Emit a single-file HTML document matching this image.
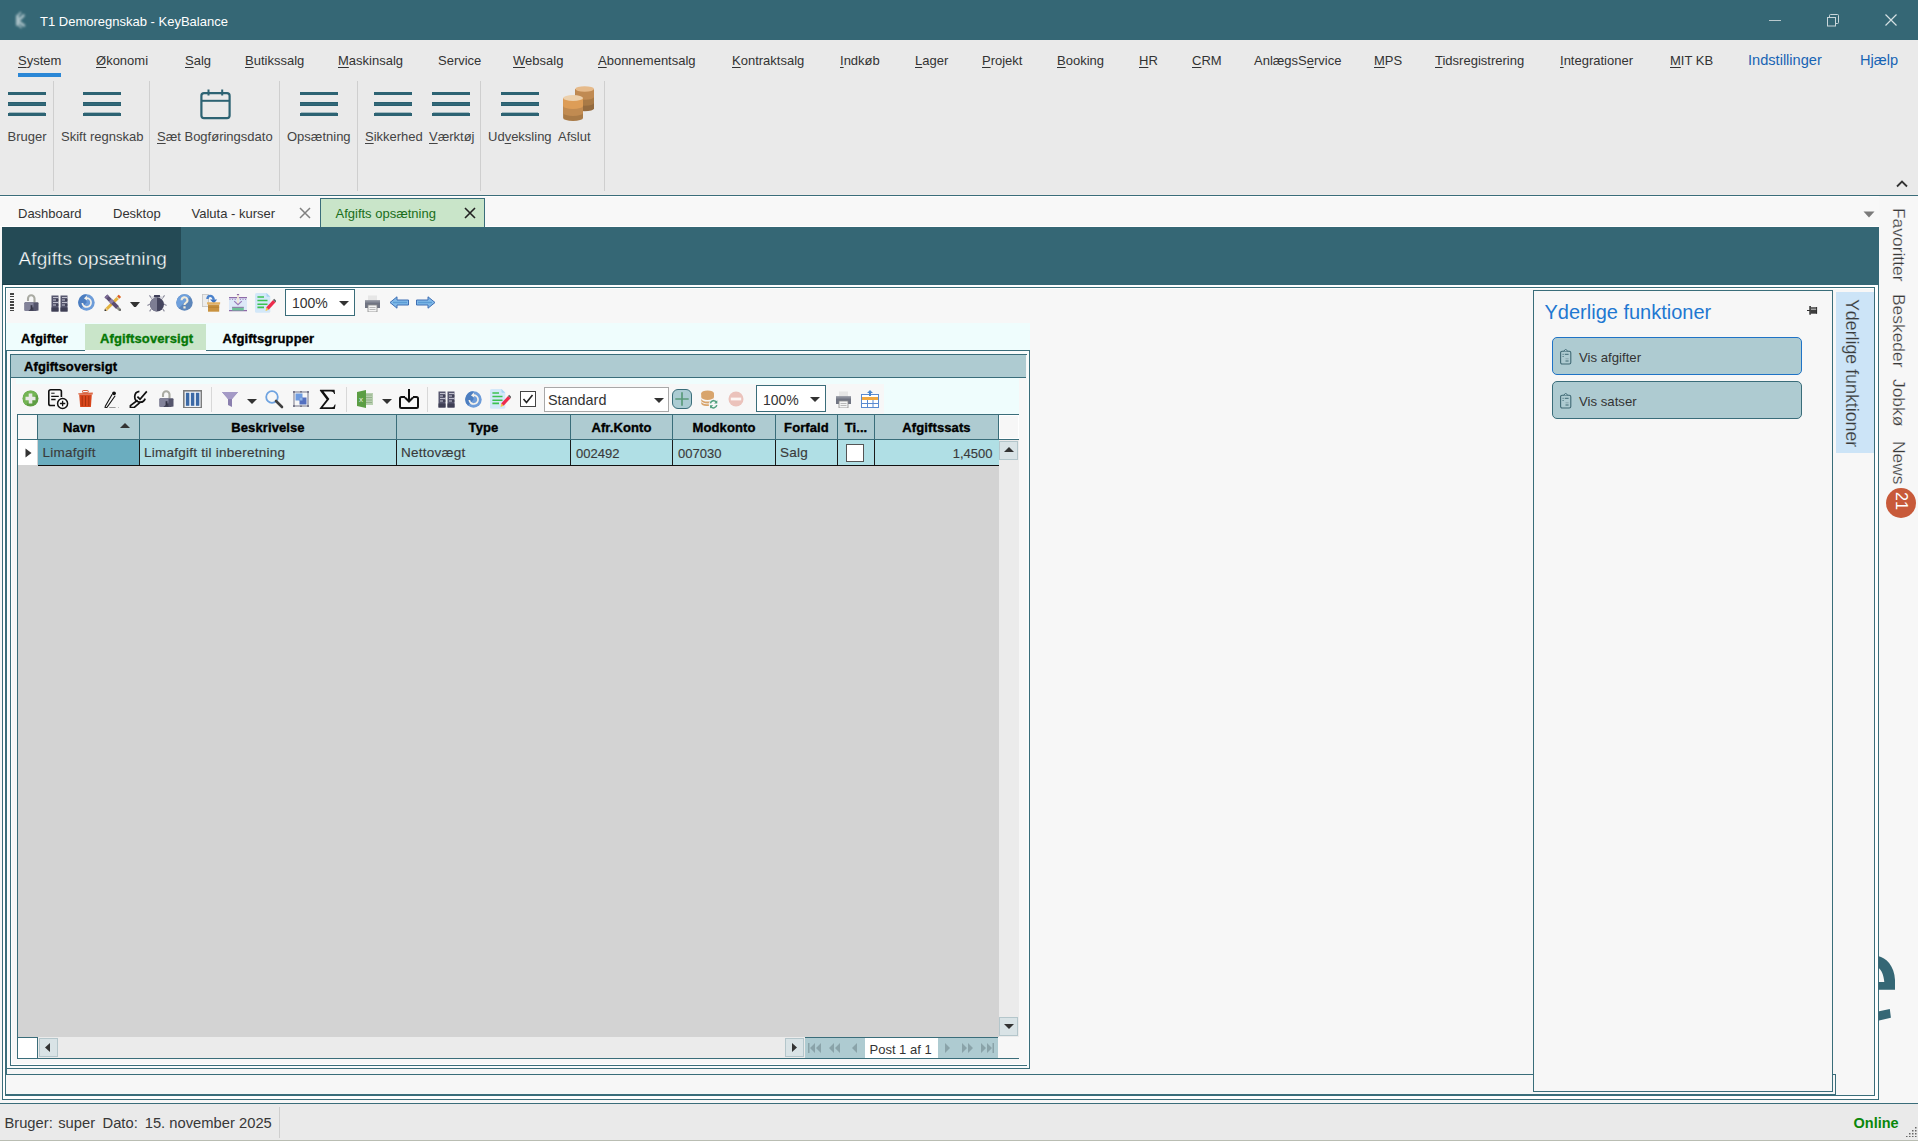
<!DOCTYPE html><html><head><meta charset="utf-8"><style>
html,body{margin:0;padding:0;}
body{width:1918px;height:1141px;position:relative;overflow:hidden;background:#f7f7f7;font-family:"Liberation Sans",sans-serif;}
div{position:absolute;box-sizing:border-box;}
.t{white-space:nowrap;}
u{text-decoration:underline;text-underline-offset:2px;text-decoration-thickness:1px;}
</style></head><body>
<div style="left:0px;top:0px;width:1918px;height:40px;background:#356775"></div>
<svg style="position:absolute;left:8px;top:8px" width="24" height="26" viewBox="0 0 24 26"><defs><filter id="kb" x="-50%" y="-50%" width="200%" height="200%"><feGaussianBlur stdDeviation="0.9"/></filter></defs><g filter="url(#kb)" stroke="#a9c0c6" stroke-linecap="round" fill="none"><path d="M9.5 8V16.5" stroke-width="3"/><path d="M15.5 7.5L10 13L16 17.5" stroke-width="2.6"/><path d="M10.5 7L12.5 4.5" stroke-width="1.6"/><path d="M11 17.5L13 19.5" stroke-width="1.6"/></g></svg>
<div class="t" style="left:40px;top:15.00px;font-size:13px;line-height:13px;font-weight:400;color:#ffffff;">T1 Demoregnskab - KeyBalance</div>
<div style="left:1769px;top:20px;width:12px;height:1px;background:#b9c9cd"></div>
<svg style="position:absolute;left:1826px;top:14px" width="13" height="13" viewBox="0 0 13 13"><rect x="1.5" y="3.5" width="8" height="8.5" fill="none" stroke="#c9d6da" stroke-width="1"/><path d="M3.5 3.5V1.5Q3.5 0.5 4.5 0.5H11.5Q12.5 0.5 12.5 1.5V8.5Q12.5 9.5 11.5 9.5H9.5" fill="none" stroke="#c9d6da" stroke-width="1"/></svg>
<svg style="position:absolute;left:1885px;top:14px" width="12" height="12" viewBox="0 0 12 12"><path d="M0.5 0.5L11.5 11.5M11.5 0.5L0.5 11.5" stroke="#d5e0e3" stroke-width="1.2"/></svg>
<div style="left:0px;top:40px;width:1918px;height:154px;background:#eaeaea"></div>
<div class="t" style="left:18px;top:54.00px;font-size:13px;line-height:13px;font-weight:400;color:#333;"><u>S</u>ystem</div>
<div class="t" style="left:96px;top:54.00px;font-size:13px;line-height:13px;font-weight:400;color:#333;"><u>Ø</u>konomi</div>
<div class="t" style="left:185px;top:54.00px;font-size:13px;line-height:13px;font-weight:400;color:#333;"><u>S</u>alg</div>
<div class="t" style="left:245px;top:54.00px;font-size:13px;line-height:13px;font-weight:400;color:#333;"><u>B</u>utikssalg</div>
<div class="t" style="left:338px;top:54.00px;font-size:13px;line-height:13px;font-weight:400;color:#333;"><u>M</u>askinsalg</div>
<div class="t" style="left:438px;top:54.00px;font-size:13px;line-height:13px;font-weight:400;color:#333;">Service</div>
<div class="t" style="left:513px;top:54.00px;font-size:13px;line-height:13px;font-weight:400;color:#333;"><u>W</u>ebsalg</div>
<div class="t" style="left:598px;top:54.00px;font-size:13px;line-height:13px;font-weight:400;color:#333;"><u>A</u>bonnementsalg</div>
<div class="t" style="left:732px;top:54.00px;font-size:13px;line-height:13px;font-weight:400;color:#333;"><u>K</u>ontraktsalg</div>
<div class="t" style="left:840px;top:54.00px;font-size:13px;line-height:13px;font-weight:400;color:#333;"><u>I</u>ndkøb</div>
<div class="t" style="left:915px;top:54.00px;font-size:13px;line-height:13px;font-weight:400;color:#333;"><u>L</u>ager</div>
<div class="t" style="left:982px;top:54.00px;font-size:13px;line-height:13px;font-weight:400;color:#333;"><u>P</u>rojekt</div>
<div class="t" style="left:1057px;top:54.00px;font-size:13px;line-height:13px;font-weight:400;color:#333;"><u>B</u>ooking</div>
<div class="t" style="left:1139px;top:54.00px;font-size:13px;line-height:13px;font-weight:400;color:#333;"><u>H</u>R</div>
<div class="t" style="left:1192px;top:54.00px;font-size:13px;line-height:13px;font-weight:400;color:#333;"><u>C</u>RM</div>
<div class="t" style="left:1254px;top:54.00px;font-size:13px;line-height:13px;font-weight:400;color:#333;">AnlægsS<u>e</u>rvice</div>
<div class="t" style="left:1374px;top:54.00px;font-size:13px;line-height:13px;font-weight:400;color:#333;"><u>M</u>PS</div>
<div class="t" style="left:1435px;top:54.00px;font-size:13px;line-height:13px;font-weight:400;color:#333;"><u>T</u>idsregistrering</div>
<div class="t" style="left:1560px;top:54.00px;font-size:13px;line-height:13px;font-weight:400;color:#333;"><u>I</u>ntegrationer</div>
<div class="t" style="left:1670px;top:54.00px;font-size:13px;line-height:13px;font-weight:400;color:#333;"><u>M</u>IT KB</div>
<div class="t" style="left:1748px;top:53.14px;font-size:14.6px;line-height:14.6px;font-weight:400;color:#1864b4;">Indstillinger</div>
<div class="t" style="left:1860px;top:53.14px;font-size:14.6px;line-height:14.6px;font-weight:400;color:#1864b4;">Hjælp</div>
<div style="left:18px;top:73px;width:43px;height:4px;background:#2b87d6"></div>
<div style="left:53px;top:81px;width:1px;height:110px;background:#cfcfcf"></div>
<div style="left:149px;top:81px;width:1px;height:110px;background:#cfcfcf"></div>
<div style="left:279px;top:81px;width:1px;height:110px;background:#cfcfcf"></div>
<div style="left:357px;top:81px;width:1px;height:110px;background:#cfcfcf"></div>
<div style="left:480px;top:81px;width:1px;height:110px;background:#cfcfcf"></div>
<div style="left:604px;top:81px;width:1px;height:110px;background:#cfcfcf"></div>
<div style="left:8px;top:92px;width:38px;height:3px;background:#2d6373"></div>
<div style="left:8px;top:102px;width:38px;height:4px;background:#326878;box-shadow:inset 0 1px 0 #2a5f6f, inset 0 -1px 0 #2a5f6f"></div>
<div style="left:9px;top:112px;width:36px;height:1px;background:#a6bcc2"></div>
<div style="left:8px;top:113px;width:38px;height:3px;background:#2d6373"></div>
<div style="left:83px;top:92px;width:38px;height:3px;background:#2d6373"></div>
<div style="left:83px;top:102px;width:38px;height:4px;background:#326878;box-shadow:inset 0 1px 0 #2a5f6f, inset 0 -1px 0 #2a5f6f"></div>
<div style="left:84px;top:112px;width:36px;height:1px;background:#a6bcc2"></div>
<div style="left:83px;top:113px;width:38px;height:3px;background:#2d6373"></div>
<div style="left:300px;top:92px;width:38px;height:3px;background:#2d6373"></div>
<div style="left:300px;top:102px;width:38px;height:4px;background:#326878;box-shadow:inset 0 1px 0 #2a5f6f, inset 0 -1px 0 #2a5f6f"></div>
<div style="left:301px;top:112px;width:36px;height:1px;background:#a6bcc2"></div>
<div style="left:300px;top:113px;width:38px;height:3px;background:#2d6373"></div>
<div style="left:374px;top:92px;width:38px;height:3px;background:#2d6373"></div>
<div style="left:374px;top:102px;width:38px;height:4px;background:#326878;box-shadow:inset 0 1px 0 #2a5f6f, inset 0 -1px 0 #2a5f6f"></div>
<div style="left:375px;top:112px;width:36px;height:1px;background:#a6bcc2"></div>
<div style="left:374px;top:113px;width:38px;height:3px;background:#2d6373"></div>
<div style="left:432px;top:92px;width:38px;height:3px;background:#2d6373"></div>
<div style="left:432px;top:102px;width:38px;height:4px;background:#326878;box-shadow:inset 0 1px 0 #2a5f6f, inset 0 -1px 0 #2a5f6f"></div>
<div style="left:433px;top:112px;width:36px;height:1px;background:#a6bcc2"></div>
<div style="left:432px;top:113px;width:38px;height:3px;background:#2d6373"></div>
<div style="left:501px;top:92px;width:38px;height:3px;background:#2d6373"></div>
<div style="left:501px;top:102px;width:38px;height:4px;background:#326878;box-shadow:inset 0 1px 0 #2a5f6f, inset 0 -1px 0 #2a5f6f"></div>
<div style="left:502px;top:112px;width:36px;height:1px;background:#a6bcc2"></div>
<div style="left:501px;top:113px;width:38px;height:3px;background:#2d6373"></div>
<svg style="position:absolute;left:200px;top:88px" width="32" height="32" viewBox="0 0 32 32"><rect x="1.4" y="5.2" width="28.2" height="25" rx="2.6" fill="none" stroke="#2d6373" stroke-width="2.2"/><path d="M1.4 12.8H29.6" stroke="#2d6373" stroke-width="2"/><path d="M8.5 1.6V7.6M22.2 1.6V7.6" stroke="#2d6373" stroke-width="2"/></svg>
<svg style="position:absolute;left:562px;top:85px" width="34" height="38" viewBox="0 0 34 38">
<path d="M13.3 4V23.5A9.35 2.7 0 0 0 32 23.5V4Z" fill="#946b3f"/>
<path d="M13.3 4V18A9.35 2.7 0 0 0 32 18V4Z" fill="#a97a46"/>
<path d="M13.3 4V12A9.35 2.7 0 0 0 32 12V4Z" fill="#c08a52"/>
<ellipse cx="22.65" cy="4" rx="9.35" ry="2.7" fill="#e6ba8a"/>
<path d="M1.1 13V33A9.95 3 0 0 0 21 33V13Z" fill="#a97a46"/>
<path d="M1.1 13V28A9.95 3 0 0 0 21 28V13Z" fill="#c18b51"/>
<path d="M1.1 13V21A9.95 3 0 0 0 21 21V13Z" fill="#dd9d57"/>
<ellipse cx="11.05" cy="13" rx="9.95" ry="3" fill="#ecd0ac"/>
</svg>
<div class="t" style="left:7.5px;top:130.00px;font-size:13px;line-height:13px;font-weight:400;color:#444;">Bruger</div>
<div class="t" style="left:61px;top:130.00px;font-size:13px;line-height:13px;font-weight:400;color:#444;">Skift regnskab</div>
<div class="t" style="left:157px;top:130.00px;font-size:13px;line-height:13px;font-weight:400;color:#444;"><u>S</u>æt Bogføringsdato</div>
<div class="t" style="left:287px;top:130.00px;font-size:13px;line-height:13px;font-weight:400;color:#444;">Opsætning</div>
<div class="t" style="left:365px;top:130.00px;font-size:13px;line-height:13px;font-weight:400;color:#444;"><u>S</u>ikkerhed</div>
<div class="t" style="left:429px;top:130.00px;font-size:13px;line-height:13px;font-weight:400;color:#444;"><u>V</u>ærktøj</div>
<div class="t" style="left:488px;top:130.00px;font-size:13px;line-height:13px;font-weight:400;color:#444;">Ud<u>v</u>eksling</div>
<div class="t" style="left:558px;top:130.00px;font-size:13px;line-height:13px;font-weight:400;color:#444;">Afslut</div>
<svg style="position:absolute;left:1896px;top:179px" width="12" height="9" viewBox="0 0 12 9"><path d="M1 7.5L6 2.5L11 7.5" fill="none" stroke="#333" stroke-width="1.8"/></svg>
<div style="left:0px;top:194px;width:1918px;height:1px;background:#eeebea"></div>
<div style="left:0px;top:196px;width:1918px;height:1px;background:#ffffff"></div>
<div style="left:0px;top:195px;width:1918px;height:1px;background:#3a6d7a"></div>
<div style="left:0px;top:196px;width:1918px;height:31px;background:#f8f8f8;border-top:1px solid #fff;border-bottom:1px solid #fff"></div>
<div class="t" style="left:18px;top:207.00px;font-size:13px;line-height:13px;font-weight:400;color:#333;">Dashboard</div>
<div class="t" style="left:113px;top:207.00px;font-size:13px;line-height:13px;font-weight:400;color:#333;">Desktop</div>
<div class="t" style="left:191.5px;top:207.00px;font-size:13px;line-height:13px;font-weight:400;color:#333;">Valuta - kurser</div>
<svg style="position:absolute;left:299px;top:207px" width="12" height="12" viewBox="0 0 12 12"><path d="M1 1L11 11M11 1L1 11" stroke="#808080" stroke-width="1.5"/></svg>
<div style="left:320px;top:198px;width:165px;height:30px;background:#c9e5c9;border:1px solid #3a6d7a;border-bottom:none"></div>
<div class="t" style="left:335.5px;top:207.00px;font-size:13px;line-height:13px;font-weight:400;color:#1a6e1a;">Afgifts opsætning</div>
<svg style="position:absolute;left:464px;top:207px" width="12" height="12" viewBox="0 0 12 12"><path d="M1 1L11 11M11 1L1 11" stroke="#222" stroke-width="1.6"/></svg>
<svg style="position:absolute;left:1863px;top:210.5px" width="12" height="7" viewBox="0 0 12 7"><path d="M0.5 0.5H11.5L6 6.5Z" fill="#7a7a7a"/></svg>
<div style="left:1879px;top:196px;width:39px;height:907px;background:#f7f7f7"></div>
<div style="left:2px;top:227px;width:1877px;height:58px;background:#356775"></div>
<div style="left:2px;top:227px;width:179px;height:58px;background:#244a55"></div>
<div style="left:2px;top:284px;width:179px;height:1px;background:#1d3f49"></div>
<div class="t" style="left:18.5px;top:248.92px;font-size:19px;line-height:19px;font-weight:400;color:#ffffff;-webkit-text-stroke:0.35px #244a55;letter-spacing:0.1px">Afgifts opsætning</div>
<div style="left:2px;top:285px;width:1877px;height:815px;border-left:1px solid #3a6d7a;border-right:1px solid #3a6d7a;border-bottom:1px solid #3a6d7a;background:#ffffff"></div>
<div style="left:5px;top:287px;width:1870px;height:809px;border:1px solid #3a6d7a;background:#f7f7f7"></div>
<div style="left:6px;top:288px;width:1868px;height:1px;background:#ffffff"></div>
<div style="left:6px;top:288px;width:1px;height:806px;background:#ffffff"></div>
<div style="left:10px;top:293.0px;width:4px;height:1.5px;background:#444"></div>
<div style="left:10px;top:295.8px;width:4px;height:1.5px;background:#444"></div>
<div style="left:10px;top:298.6px;width:4px;height:1.5px;background:#444"></div>
<div style="left:10px;top:301.4px;width:4px;height:1.5px;background:#444"></div>
<div style="left:10px;top:304.2px;width:4px;height:1.5px;background:#444"></div>
<div style="left:10px;top:307.0px;width:4px;height:1.5px;background:#444"></div>
<div style="left:10px;top:309.8px;width:4px;height:1.5px;background:#444"></div>
<svg style="position:absolute;left:24px;top:294px" width="15" height="17" viewBox="0 0 15 17"><path d="M4 7V4.5A3.2 3.2 0 0 1 10.5 4.5V8.5" fill="none" stroke="#a9aaa2" stroke-width="2.1"/><path d="M0.5 9.2Q0.5 8.2 1.5 8.2H13.5Q14.5 8.2 14.5 9.2V16.5Q7.5 18 0.5 16.5Z" fill="#55556c"/><path d="M0.5 9.2Q0.5 8.2 1.5 8.2H9.5V14L4 17.3L0.5 16.5Z" fill="#828299"/><path d="M4 17.3L9.5 12.5V17.4Q6.5 17.6 4 17.3Z" fill="#444458"/><path d="M6.6 11.2H8.4V15.5H6.6Z" fill="#333344"/></svg>
<svg style="position:absolute;left:51px;top:295px" width="17" height="17" viewBox="0 0 17 17"><rect x="0.5" y="0.5" width="7" height="16" fill="#56566e"/><rect x="9.5" y="0.5" width="7" height="16" fill="#56566e"/><path d="M2 2.5H7.5M2 5H5M2 7.5H7.5M2 10H5M11 2.5H16.5M11 5H14M11 7.5H16.5M11 10H14" stroke="#c0c0cc" stroke-width="1.1"/><path d="M5 5H7.5M5 10H7.5M14 5H16.5M14 10H16.5" stroke="#2e2e40" stroke-width="1.1"/><rect x="0.5" y="12.5" width="7" height="4" fill="#3e3e54"/><rect x="9.5" y="12.5" width="7" height="4" fill="#3e3e54"/></svg>
<svg style="position:absolute;left:78px;top:294px" width="17" height="17" viewBox="0 0 17 17"><circle cx="8.5" cy="8.5" r="8.2" fill="#6d9cd9"/><path d="M8.5 0.3A8.2 8.2 0 0 0 3 14.6L8.5 8.5Z" fill="#4d7ec0"/><path d="M8.2 4.2A4.4 4.4 0 1 1 4.3 9" fill="none" stroke="#f4f1ea" stroke-width="1.7"/><path d="M8.8 1.6L6 4.5L9.2 6.6Z" fill="#f4f1ea"/></svg>
<svg style="position:absolute;left:104px;top:294px" width="17" height="17" viewBox="0 0 17 17"><path d="M15.8 1.9L1.4 16.3" stroke="#e5b43e" stroke-width="3"/><path d="M15.8 1.9L14.4 3.3" stroke="#e0582e" stroke-width="3.2"/><path d="M14.1 3.6L13.5 4.2" stroke="#d6dcdc" stroke-width="3"/><path d="M3 14.7L1.2 16.5" stroke="#e8c890" stroke-width="2.4"/><path d="M1.9 15.8L0.8 16.9" stroke="#333" stroke-width="1.6"/><path d="M1.9 1.9L13.6 13.6" stroke="#5b4d72" stroke-width="4"/><path d="M6.2 6.2L8.6 8.6" stroke="#8d7da6" stroke-width="4"/><path d="M1.9 1.9L3.5 3.5" stroke="#7c6c96" stroke-width="4"/><path d="M13.4 13.4L16.2 16.2" stroke="#8c8c86" stroke-width="2.8"/><path d="M15.6 15.6L16.6 16.6" stroke="#444" stroke-width="1.4"/></svg>
<svg style="position:absolute;left:130px;top:302px" width="10" height="5" viewBox="0 0 10 5"><path d="M0 0H10L5 6Z" fill="#333"/></svg>
<svg style="position:absolute;left:147px;top:294px" width="20" height="18" viewBox="0 0 20 18"><path d="M5 4.6L2.4 1.4M15 4.6L17.6 1.4M3.2 10L0.4 11.6M16.8 10L19.6 11.6M4.2 15L2.6 17.4M15.8 15L17.4 17.4" stroke="#8c8c9c" stroke-width="1.1"/><path d="M7.2 0.9H12.8L13.4 3.2H6.6Z" fill="#3e3e58"/><ellipse cx="10" cy="10.4" rx="7" ry="7.1" fill="#45455e"/><path d="M10 3.3A7 7.1 0 0 0 10 17.5Z" fill="#7d7d93"/><ellipse cx="5.6" cy="3.4" rx="1.6" ry="0.9" fill="#d4d4dc"/><ellipse cx="14.4" cy="3.4" rx="1.6" ry="0.9" fill="#d4d4dc"/></svg>
<svg style="position:absolute;left:176px;top:294px" width="17" height="17" viewBox="0 0 17 17"><circle cx="8.5" cy="8.5" r="8.2" fill="#5d86bb"/><path d="M2.7 14.3A8.2 8.2 0 0 1 14.3 2.7Z" fill="#6fa0dc"/><path d="M5.6 6.2A2.9 2.9 0 1 1 9.8 8.8C8.9 9.3 8.5 9.8 8.5 11" fill="none" stroke="#f2ecdc" stroke-width="2.1"/><rect x="7.4" y="12.3" width="2.2" height="2.2" fill="#f2ecdc"/></svg>
<svg style="position:absolute;left:202px;top:294px" width="19" height="18" viewBox="0 0 19 18"><rect x="0.4" y="0.4" width="6" height="12.2" fill="#ececec" stroke="#c4c4c4" stroke-width="0.8"/><path d="M5.4 5C5.6 1.2 10.6 0.2 11.9 5.8" fill="none" stroke="#4b82cc" stroke-width="2.4"/><path d="M8 5.6H15.2L11.8 9.6Z" fill="#3f74c0"/><path d="M5 8.2H18.2L18 10.6H5.2Z" fill="#e2b163"/><path d="M6 10.6H17.2V17.7H6Z" fill="#c9923f"/><path d="M6 13.2H17.2" stroke="#b07a30" stroke-width="0.8"/></svg>
<svg style="position:absolute;left:229px;top:294px" width="19" height="18" viewBox="0 0 19 18"><rect x="0" y="3.4" width="18" height="13.4" fill="#dde9f8"/><path d="M0 3.6H18M0 16.6H18" stroke="#8f6aa8" stroke-width="1.1"/><path d="M0.5 5.4H17.5" stroke="#9a78b8" stroke-width="1" stroke-dasharray="1 1.6"/><rect x="8.1" y="0.6" width="1.8" height="9.4" fill="#f3e8d6"/><rect x="7.9" y="0" width="2.2" height="1.2" fill="#8f6aa8"/><path d="M5.2 7.1L9 10.6L12.8 7.1" fill="none" stroke="#9a78b8" stroke-width="1.2"/><rect x="3.1" y="13.2" width="11.7" height="3.3" fill="#6cc296"/><path d="M3.1 13.3H14.8" stroke="#8f6aa8" stroke-width="0.9"/></svg>
<svg style="position:absolute;left:255px;top:293px" width="21" height="20" viewBox="0 0 21 20"><path d="M1.5 0H11.5L15.3 3.8V18.2Q15.3 19.7 13.8 19.7H1.5Q0 19.7 0 18.2V1.5Q0 0 1.5 0Z" fill="#d3e8f9"/><path d="M11.5 0L15.3 3.8H12.3Q11.5 3.8 11.5 3Z" fill="#a8d4f2"/><path d="M2.4 4H9M2.4 7.5H12.5M2.4 11.2H12.5M2.4 14.4H9" stroke="#3cc250" stroke-width="1.6"/><path d="M19.3 8.1L12.4 15.6" stroke="#ee2c4c" stroke-width="3.4"/><path d="M11.2 14.4L13.6 16.8L10.6 17.9Z" fill="#f5c542"/><path d="M19.2 8.2L20.4 6.9" stroke="#666" stroke-width="3.4"/></svg>
<div style="left:285px;top:289px;width:70px;height:27px;background:#fff;border:1px solid #3a6d7a"></div>
<div class="t" style="left:292px;top:296.45px;font-size:14px;line-height:14px;font-weight:400;color:#333;">100%</div>
<svg style="position:absolute;left:339px;top:301px" width="10" height="5" viewBox="0 0 10 5"><path d="M0 0H10L5 5Z" fill="#333"/></svg>
<svg style="position:absolute;left:364px;top:295px" width="17" height="17" viewBox="0 0 17 17"><rect x="4" y="0.5" width="9" height="5" fill="#e6e6e6"/><path d="M1 5.5H16V13H1Z" fill="#707482"/><rect x="1" y="5.5" width="15" height="2" fill="#8a8e9a"/><rect x="4" y="10" width="9" height="7" fill="#f4f4f4" stroke="#8a8a8a" stroke-width="0.8"/><path d="M5.5 12.5H11.5M5.5 14.5H11.5" stroke="#aaa" stroke-width="0.8"/></svg>
<svg style="position:absolute;left:389px;top:296px" width="21" height="13" viewBox="0 0 21 13"><path d="M1 6.5L8 0.8V4H19.5V9H8V12.2Z" fill="#80b9e8" stroke="#3f6fb4" stroke-width="1"/><path d="M4 6.5H18" stroke="#5b9cd6" stroke-width="1.4"/></svg>
<svg style="position:absolute;left:415px;top:296px" width="21" height="13" viewBox="0 0 21 13"><path d="M20 6.5L13 0.8V4H1.5V9H13V12.2Z" fill="#80b9e8" stroke="#3f6fb4" stroke-width="1"/><path d="M3 6.5H17" stroke="#5b9cd6" stroke-width="1.4"/></svg>
<div style="left:6px;top:323px;width:1024px;height:27px;background:#effdfd"></div>
<div style="left:85px;top:324px;width:121px;height:27px;background:#c9e5c9"></div>
<div class="t" style="left:21px;top:331.50px;font-size:13px;line-height:13px;font-weight:700;color:#000;-webkit-text-stroke:0.35px currentColor;letter-spacing:0.1px">Afgifter</div>
<div class="t" style="left:100px;top:331.50px;font-size:13px;line-height:13px;font-weight:700;color:#067806;-webkit-text-stroke:0.35px currentColor;letter-spacing:0.1px">Afgiftsoversigt</div>
<div class="t" style="left:222.5px;top:331.50px;font-size:13px;line-height:13px;font-weight:700;color:#000;-webkit-text-stroke:0.35px currentColor;letter-spacing:0.1px">Afgiftsgrupper</div>
<div style="left:6px;top:350px;width:1024px;height:719px;border:1px solid #3a6d7a;border-top:none;background:#f9fbfb"></div>
<div style="left:6px;top:350px;width:79px;height:1px;background:#3a6d7a"></div>
<div style="left:206px;top:350px;width:824px;height:1px;background:#3a6d7a"></div>
<div style="left:10px;top:354px;width:1017px;height:712px;border:1px solid #3a6d7a;border-right:none;background:#f7f7f7"></div>
<div style="left:11px;top:355px;width:1015px;height:710px;border:1px solid #ffffff;border-right:none"></div>
<div style="left:16px;top:378px;width:1003px;height:36px;background:#effdfd"></div>
<div style="left:11px;top:355px;width:1015px;height:22px;background:#aecbd1"></div>
<div style="left:11px;top:377px;width:1015px;height:1px;background:#3a6d7a"></div>
<div class="t" style="left:24px;top:359.70px;font-size:13px;line-height:13px;font-weight:700;color:#000;-webkit-text-stroke:0.35px currentColor;letter-spacing:0.1px">Afgiftsoversigt</div>
<div style="left:16px;top:384px;width:868px;height:30px;background:#f7f7f7"></div>
<svg style="position:absolute;left:22px;top:390px" width="17" height="17" viewBox="0 0 17 17"><circle cx="8.5" cy="8.5" r="8" fill="#5f9e43"/><path d="M1 8.5A7.5 7.5 0 0 1 15.2 5L8.5 8.5L4 15.2A7.5 7.5 0 0 1 1 8.5Z" fill="#74b554"/><path d="M8.5 3.5V13.5M3.5 8.5H13.5" stroke="#e9e9e7" stroke-width="3.6"/></svg>
<svg style="position:absolute;left:48px;top:389px" width="21" height="21" viewBox="0 0 21 21"><path d="M7 16.5H2.6A1.8 1.8 0 0 1 0.8 14.7V2.6A1.8 1.8 0 0 1 2.6 0.8H11.6A1.8 1.8 0 0 1 13.4 2.6V8" fill="none" stroke="#111" stroke-width="1.6"/><path d="M3.2 4.3H6.6" stroke="#555" stroke-width="1.4"/><path d="M3.2 7.4H10.8M3.2 10.5H7.6" stroke="#111" stroke-width="1.3"/><circle cx="14.6" cy="14.5" r="5" fill="#fff" stroke="#111" stroke-width="1.5"/><path d="M14.6 11.8V17.2M11.9 14.5H17.3" stroke="#111" stroke-width="1.3"/></svg>
<svg style="position:absolute;left:78px;top:390px" width="15" height="17" viewBox="0 0 15 17"><path d="M0.2 3.2L14.8 2.6V4.6H0.4Z" fill="#dc6a48"/><rect x="4.6" y="0.5" width="5.6" height="2.2" rx="0.6" fill="none" stroke="#d65a34" stroke-width="1"/><path d="M1.2 4.6H13.8L12.9 16.9H2.2Z" fill="#d8461c"/><path d="M4.2 6V16M7.5 6V16M10.8 6V16" stroke="#a8320e" stroke-width="1"/></svg>
<svg style="position:absolute;left:104px;top:389px" width="16" height="19" viewBox="0 0 16 19"><path d="M8.2 5.2L1.3 17.2L1 19.4L3 18.3L11.2 6.8" fill="none" stroke="#111" stroke-width="1.1"/><circle cx="10" cy="4.3" r="1.9" fill="#111"/><path d="M5.2 19.2H11.6" stroke="#222" stroke-width="1.3"/><rect x="14" y="18.7" width="1" height="1" fill="#444"/></svg>
<svg style="position:absolute;left:129px;top:389px" width="19" height="19" viewBox="0 0 19 19"><path d="M10.4 2.4A5.4 5.4 0 1 0 16.2 9.6" fill="none" stroke="#111" stroke-width="1.7"/><path d="M8.6 11.2L1.4 16.6V18.6H5L11.4 13.2" fill="none" stroke="#111" stroke-width="1.7" stroke-linejoin="round"/><path d="M8.4 7.6L11 10.2L17.8 2.4" fill="none" stroke="#111" stroke-width="1.7"/></svg>
<svg style="position:absolute;left:159px;top:390px" width="15" height="17" viewBox="0 0 15 17"><path d="M4 7V4.5A3.2 3.2 0 0 1 10.5 4.5V8.5" fill="none" stroke="#a9aaa2" stroke-width="2.1"/><path d="M0.5 9.2Q0.5 8.2 1.5 8.2H13.5Q14.5 8.2 14.5 9.2V16.5Q7.5 18 0.5 16.5Z" fill="#55556c"/><path d="M0.5 9.2Q0.5 8.2 1.5 8.2H9.5V14L4 17.3L0.5 16.5Z" fill="#828299"/><path d="M4 17.3L9.5 12.5V17.4Q6.5 17.6 4 17.3Z" fill="#444458"/><path d="M6.6 11.2H8.4V15.5H6.6Z" fill="#333344"/></svg>
<svg style="position:absolute;left:183px;top:390px" width="19" height="18" viewBox="0 0 19 18"><rect x="0.8" y="0.8" width="17.6" height="17" fill="#eef2f8" stroke="#7c7c7c" stroke-width="1.6"/><rect x="2.9" y="2.8" width="3.4" height="13" fill="#3b69a6"/><rect x="7.9" y="2.8" width="3.4" height="13" fill="#3b69a6"/><rect x="12.9" y="2.8" width="3.4" height="13" fill="#3b69a6"/></svg>
<div style="left:211px;top:387px;width:1px;height:25px;background:#d8d8d8"></div>
<svg style="position:absolute;left:222px;top:391px" width="16" height="16" viewBox="0 0 16 16"><path d="M0 1H16L10 8V16L6 14V8Z" fill="#8a7fae"/><path d="M0 1H16L10 8H6Z" fill="#a49ac6"/></svg>
<svg style="position:absolute;left:247px;top:399px" width="10" height="5" viewBox="0 0 10 5"><path d="M0 0H10L5 5Z" fill="#333"/></svg>
<svg style="position:absolute;left:265px;top:390px" width="19" height="19" viewBox="0 0 19 19"><circle cx="7" cy="7" r="5.8" fill="none" stroke="#6fa3e0" stroke-width="1.8"/><path d="M11 11L17 17" stroke="#404040" stroke-width="2.6" stroke-linecap="round"/></svg>
<svg style="position:absolute;left:293px;top:391px" width="16" height="16" viewBox="0 0 16 16"><rect x="1" y="1" width="14" height="14" fill="none" stroke="#8a8a9a" stroke-width="1.2"/><rect x="2.5" y="2.5" width="7" height="7" fill="#6e9be0"/><rect x="6.5" y="6.5" width="7" height="7" fill="#5470c0"/><rect x="6.5" y="6.5" width="3" height="3" fill="#8fb3e6"/><path d="M0 0h2v2h-2zM14 0h2v2h-2zM0 14h2v2h-2zM14 14h2v2h-2zM7 0h2v1.5h-2zM7 14.5h2v1.5h-2z" fill="#7a7a8c"/></svg>
<svg style="position:absolute;left:319px;top:389px" width="17" height="21" viewBox="0 0 17 21"><path d="M1 0.8H15.6L16 5H15.2Q14.6 2.6 12 2.6H4.6L10.4 10L3.8 18.2H12.6Q15 18.2 15.8 15.4H16.6L15.8 20H0.6V19.4L7.6 10.6L0.8 1.6Z" fill="#111"/></svg>
<div style="left:346px;top:387px;width:1px;height:25px;background:#d8d8d8"></div>
<svg style="position:absolute;left:357px;top:390px" width="17" height="18" viewBox="0 0 17 18"><path d="M5 3H16V15H5Z" fill="#b8cfb0"/><path d="M7 5H15M7 7.5H15M7 10H15M7 12.5H15" stroke="#8aa880" stroke-width="0.8"/><path d="M0 2L9 0V18L0 16Z" fill="#5c9e44"/><text x="2" y="12" font-size="8" fill="#e8f4e0" font-family="Liberation Sans">x</text></svg>
<svg style="position:absolute;left:382px;top:399px" width="10" height="5" viewBox="0 0 10 5"><path d="M0 0H10L5 5Z" fill="#333"/></svg>
<svg style="position:absolute;left:399px;top:389px" width="20" height="20" viewBox="0 0 20 20"><path d="M6 8H2.5A1.5 1.5 0 0 0 1 9.5V17.5A1.5 1.5 0 0 0 2.5 19H17.5A1.5 1.5 0 0 0 19 17.5V9.5A1.5 1.5 0 0 0 17.5 8H14" fill="none" stroke="#111" stroke-width="2"/><path d="M10 0V12M6 8.5L10 12.5L14 8.5" fill="none" stroke="#111" stroke-width="2"/></svg>
<div style="left:427px;top:387px;width:1px;height:25px;background:#d8d8d8"></div>
<svg style="position:absolute;left:438px;top:391px" width="17" height="17" viewBox="0 0 17 17"><rect x="0.5" y="0.5" width="7" height="16" fill="#56566e"/><rect x="9.5" y="0.5" width="7" height="16" fill="#56566e"/><path d="M2 2.5H7.5M2 5H5M2 7.5H7.5M2 10H5M11 2.5H16.5M11 5H14M11 7.5H16.5M11 10H14" stroke="#c0c0cc" stroke-width="1.1"/><path d="M5 5H7.5M5 10H7.5M14 5H16.5M14 10H16.5" stroke="#2e2e40" stroke-width="1.1"/><rect x="0.5" y="12.5" width="7" height="4" fill="#3e3e54"/><rect x="9.5" y="12.5" width="7" height="4" fill="#3e3e54"/></svg>
<svg style="position:absolute;left:465px;top:391px" width="17" height="17" viewBox="0 0 17 17"><circle cx="8.5" cy="8.5" r="8.2" fill="#6d9cd9"/><path d="M8.5 0.3A8.2 8.2 0 0 0 3 14.6L8.5 8.5Z" fill="#4d7ec0"/><path d="M8.2 4.2A4.4 4.4 0 1 1 4.3 9" fill="none" stroke="#f4f1ea" stroke-width="1.7"/><path d="M8.8 1.6L6 4.5L9.2 6.6Z" fill="#f4f1ea"/></svg>
<svg style="position:absolute;left:490px;top:389px" width="21" height="20" viewBox="0 0 21 20"><path d="M1.5 0H11.5L15.3 3.8V18.2Q15.3 19.7 13.8 19.7H1.5Q0 19.7 0 18.2V1.5Q0 0 1.5 0Z" fill="#d3e8f9"/><path d="M11.5 0L15.3 3.8H12.3Q11.5 3.8 11.5 3Z" fill="#a8d4f2"/><path d="M2.4 4H9M2.4 7.5H12.5M2.4 11.2H12.5M2.4 14.4H9" stroke="#3cc250" stroke-width="1.6"/><path d="M19.3 8.1L12.4 15.6" stroke="#ee2c4c" stroke-width="3.4"/><path d="M11.2 14.4L13.6 16.8L10.6 17.9Z" fill="#f5c542"/><path d="M19.2 8.2L20.4 6.9" stroke="#666" stroke-width="3.4"/></svg>
<div style="left:520px;top:391px;width:16px;height:16px;background:#fff;border:1px solid #444"></div>
<svg style="position:absolute;left:522px;top:393px" width="12" height="12" viewBox="0 0 12 12"><path d="M1.5 6L4.5 9.5L10.5 2" fill="none" stroke="#222" stroke-width="1.6"/></svg>
<div style="left:544px;top:387px;width:125px;height:25px;background:#fff;border:1px solid #a8a8a8"></div>
<div class="t" style="left:548px;top:392.81px;font-size:14.4px;line-height:14.4px;font-weight:400;color:#333;">Standard</div>
<svg style="position:absolute;left:654px;top:398px" width="10" height="5" viewBox="0 0 10 5"><path d="M0 0H10L5 5Z" fill="#333"/></svg>
<div style="left:672px;top:389px;width:20px;height:20px;background:#abccd3;border:1px solid #3a6d7a;border-radius:6px"></div>
<svg style="position:absolute;left:675px;top:392px" width="14" height="14" viewBox="0 0 14 14"><path d="M7 0.3V13.7M0.3 7H13.7" stroke="#5b9b7b" stroke-width="1.7"/></svg>
<svg style="position:absolute;left:701px;top:390px" width="19" height="19" viewBox="0 0 19 19"><ellipse cx="6.6" cy="3.6" rx="6.4" ry="3.2" fill="#d8a46c"/><path d="M0.2 3.6V7A6.4 3 0 0 0 13 7V3.6Z" fill="#d8a46c"/><path d="M0.2 8.6V10.4A6.4 3 0 0 0 13 10.4V8.6A6.4 3 0 0 1 0.2 8.6Z" fill="#d8a46c"/><path d="M0.2 12V13.4A6.4 3 0 0 0 12 14.6V12.6A6.4 3 0 0 1 0.2 12Z" fill="#d8a46c"/><circle cx="12.6" cy="14.3" r="4.8" fill="#f7f7f7"/><path d="M9.4 13.4A3.4 3.4 0 0 1 15.4 12M15.8 15.2A3.4 3.4 0 0 1 9.8 16.6" fill="none" stroke="#52a07e" stroke-width="1.5"/><path d="M16.3 10.2V13.4H13.1Z M9 18.4V15.2H12.2Z" fill="#52a07e"/></svg>
<svg style="position:absolute;left:728px;top:391px" width="16" height="16" viewBox="0 0 16 16"><circle cx="8" cy="8" r="7.5" fill="#ebc2bb"/><rect x="2.8" y="6.6" width="10.4" height="2.8" fill="#fdf6f4"/></svg>
<div style="left:756px;top:385px;width:70px;height:27px;background:#fff;border:1px solid #3a6d7a"></div>
<div class="t" style="left:763px;top:393.15px;font-size:14px;line-height:14px;font-weight:400;color:#333;">100%</div>
<svg style="position:absolute;left:810px;top:397px" width="10" height="5" viewBox="0 0 10 5"><path d="M0 0H10L5 5Z" fill="#333"/></svg>
<svg style="position:absolute;left:835px;top:391px" width="17" height="17" viewBox="0 0 17 17"><rect x="4" y="0.5" width="9" height="5" fill="#e6e6e6"/><path d="M1 5.5H16V13H1Z" fill="#707482"/><rect x="1" y="5.5" width="15" height="2" fill="#8a8e9a"/><rect x="4" y="10" width="9" height="7" fill="#f4f4f4" stroke="#8a8a8a" stroke-width="0.8"/><path d="M5.5 12.5H11.5M5.5 14.5H11.5" stroke="#aaa" stroke-width="0.8"/></svg>
<svg style="position:absolute;left:861px;top:390px" width="18" height="18" viewBox="0 0 18 18"><rect x="0.5" y="4.5" width="17" height="13" fill="#fff" stroke="#5a8ad0" stroke-width="1"/><rect x="1" y="7" width="16" height="3" fill="#f0a840"/><path d="M1 13.5H17M6.5 10V17.5M12 10V17.5" stroke="#5a8ad0" stroke-width="1"/><path d="M9 0L6 3H8V6H10V3H12Z" fill="#4a86d0"/></svg>
<div style="left:17px;top:414px;width:1002px;height:645px;border:1px solid #3a6d7a;border-right:none;background:#d3d3d3"></div>
<div style="left:18px;top:415px;width:19px;height:24px;background:#f7f7f7"></div>
<div style="left:38px;top:415px;width:961px;height:24px;background:#aecbd1"></div>
<div style="left:999px;top:415px;width:20px;height:24px;background:#f7f7f7;border:1px solid #fff"></div>
<div style="left:18px;top:439px;width:1001px;height:1px;background:#3a6d7a"></div>
<div style="left:37px;top:415px;width:1px;height:24px;background:#3a6d7a"></div>
<div style="left:139px;top:415px;width:1px;height:24px;background:#3a6d7a"></div>
<div style="left:396px;top:415px;width:1px;height:24px;background:#3a6d7a"></div>
<div style="left:570px;top:415px;width:1px;height:24px;background:#3a6d7a"></div>
<div style="left:672px;top:415px;width:1px;height:24px;background:#3a6d7a"></div>
<div style="left:775px;top:415px;width:1px;height:24px;background:#3a6d7a"></div>
<div style="left:837px;top:415px;width:1px;height:24px;background:#3a6d7a"></div>
<div style="left:874px;top:415px;width:1px;height:24px;background:#3a6d7a"></div>
<div style="left:998px;top:415px;width:1px;height:24px;background:#3a6d7a"></div>
<div class="t" style="left:-221px;width:600px;text-align:center;top:421.00px;font-size:13px;line-height:13px;font-weight:700;color:#000;-webkit-text-stroke:0.35px currentColor;letter-spacing:0.1px">Navn</div>
<div class="t" style="left:-32px;width:600px;text-align:center;top:421.00px;font-size:13px;line-height:13px;font-weight:700;color:#000;-webkit-text-stroke:0.35px currentColor;letter-spacing:0.1px">Beskrivelse</div>
<div class="t" style="left:183.5px;width:600px;text-align:center;top:421.00px;font-size:13px;line-height:13px;font-weight:700;color:#000;-webkit-text-stroke:0.35px currentColor;letter-spacing:0.1px">Type</div>
<div class="t" style="left:321.5px;width:600px;text-align:center;top:421.00px;font-size:13px;line-height:13px;font-weight:700;color:#000;-webkit-text-stroke:0.35px currentColor;letter-spacing:0.1px">Afr.Konto</div>
<div class="t" style="left:424px;width:600px;text-align:center;top:421.00px;font-size:13px;line-height:13px;font-weight:700;color:#000;-webkit-text-stroke:0.35px currentColor;letter-spacing:0.1px">Modkonto</div>
<div class="t" style="left:506.5px;width:600px;text-align:center;top:421.00px;font-size:13px;line-height:13px;font-weight:700;color:#000;-webkit-text-stroke:0.35px currentColor;letter-spacing:0.1px">Forfald</div>
<div class="t" style="left:556px;width:600px;text-align:center;top:421.00px;font-size:13px;line-height:13px;font-weight:700;color:#000;-webkit-text-stroke:0.35px currentColor;letter-spacing:0.1px">Ti...</div>
<div class="t" style="left:636.5px;width:600px;text-align:center;top:421.00px;font-size:13px;line-height:13px;font-weight:700;color:#000;-webkit-text-stroke:0.35px currentColor;letter-spacing:0.1px">Afgiftssats</div>
<svg style="position:absolute;left:120px;top:423px" width="10" height="5" viewBox="0 0 10 5"><path d="M0 5H10L5 0Z" fill="#333"/></svg>
<div style="left:18px;top:440px;width:19px;height:25px;background:#ffffff"></div>
<div style="left:38px;top:440px;width:961px;height:25px;background:#b0dfe5"></div>
<div style="left:38px;top:440px;width:101px;height:25px;background:#6badbf"></div>
<div style="left:139px;top:440px;width:1px;height:25px;background:#1a1a1a"></div>
<div style="left:396px;top:440px;width:1px;height:25px;background:#1a1a1a"></div>
<div style="left:570px;top:440px;width:1px;height:25px;background:#1a1a1a"></div>
<div style="left:672px;top:440px;width:1px;height:25px;background:#1a1a1a"></div>
<div style="left:775px;top:440px;width:1px;height:25px;background:#1a1a1a"></div>
<div style="left:837px;top:440px;width:1px;height:25px;background:#1a1a1a"></div>
<div style="left:874px;top:440px;width:1px;height:25px;background:#1a1a1a"></div>
<div style="left:38px;top:465px;width:961px;height:1px;background:#111"></div>
<svg style="position:absolute;left:25px;top:448px" width="7" height="10" viewBox="0 0 7 10"><path d="M0.5 0.5L6.5 5L0.5 9.5Z" fill="#333"/></svg>
<div class="t" style="left:42.5px;top:446.07px;font-size:13.5px;line-height:13.5px;font-weight:400;color:#3a3a3a;letter-spacing:0.25px;-webkit-text-stroke:0.15px currentColor">Limafgift</div>
<div class="t" style="left:144px;top:446.07px;font-size:13.5px;line-height:13.5px;font-weight:400;color:#3a3a3a;letter-spacing:0.25px;-webkit-text-stroke:0.15px currentColor">Limafgift til inberetning</div>
<div class="t" style="left:401px;top:446.07px;font-size:13.5px;line-height:13.5px;font-weight:400;color:#3a3a3a;letter-spacing:0.25px;-webkit-text-stroke:0.15px currentColor">Nettovægt</div>
<div class="t" style="left:780px;top:446.07px;font-size:13.5px;line-height:13.5px;font-weight:400;color:#3a3a3a;letter-spacing:0.25px;-webkit-text-stroke:0.15px currentColor">Salg</div>
<div class="t" style="left:576px;top:446.50px;font-size:13px;line-height:13px;font-weight:400;color:#3a3a3a;-webkit-text-stroke:0.15px currentColor">002492</div>
<div class="t" style="left:678px;top:446.50px;font-size:13px;line-height:13px;font-weight:400;color:#3a3a3a;-webkit-text-stroke:0.15px currentColor">007030</div>
<div class="t" style="left:392.5px;width:600px;text-align:right;top:446.50px;font-size:13px;line-height:13px;font-weight:400;color:#3a3a3a;-webkit-text-stroke:0.15px currentColor">1,4500</div>
<div style="left:846px;top:444px;width:18px;height:18px;background:#fff;border:1px solid #555"></div>
<div style="left:999px;top:440px;width:20px;height:597px;background:#ebebeb"></div>
<div style="left:999px;top:441px;width:19px;height:19px;background:#d9e3e6;border:1px solid #b4c6cb"></div>
<svg style="position:absolute;left:1004px;top:447px" width="10" height="5" viewBox="0 0 10 5"><path d="M0 5H10L5 0Z" fill="#333"/></svg>
<div style="left:999px;top:1017px;width:19px;height:19px;background:#d9e3e6;border:1px solid #b4c6cb"></div>
<svg style="position:absolute;left:1004px;top:1024px" width="10" height="5" viewBox="0 0 10 5"><path d="M0 0H10L5 5Z" fill="#333"/></svg>
<div style="left:18px;top:1037px;width:981px;height:21px;background:#ebebeb"></div>
<div style="left:998px;top:1037px;width:21px;height:21px;background:#f7f7f7"></div>
<div style="left:17px;top:1037px;width:21px;height:22px;background:#fff;border:1px solid #3a6d7a"></div>
<div style="left:39px;top:1038px;width:19px;height:19px;background:#d9e3e6;border:1px solid #b4c6cb"></div>
<svg style="position:absolute;left:45px;top:1043px" width="5" height="9" viewBox="0 0 5 9"><path d="M5 0V9L0 4.5Z" fill="#333"/></svg>
<div style="left:785px;top:1038px;width:19px;height:19px;background:#d9e3e6;border:1px solid #b4c6cb"></div>
<svg style="position:absolute;left:792px;top:1043px" width="5" height="9" viewBox="0 0 5 9"><path d="M0 0V9L5 4.5Z" fill="#333"/></svg>
<div style="left:805px;top:1037px;width:193px;height:21px;background:#aecbd1"></div>
<div style="left:805px;top:1037px;width:193px;height:1px;background:#3a6d7a"></div>
<div style="left:865px;top:1038px;width:73px;height:20px;background:#fff"></div>
<div class="t" style="left:869.5px;top:1042.50px;font-size:13px;line-height:13px;font-weight:400;color:#333;">Post 1 af 1</div>
<svg style="position:absolute;left:808px;top:1043px" width="14" height="10" viewBox="0 0 14 10"><rect x="0" y="0" width="1.5" height="10" fill="#8aa3a9"/><path d="M7 0V10L2 5Z M13 0V10L8 5Z" fill="#8aa3a9"/></svg>
<svg style="position:absolute;left:829px;top:1043px" width="11" height="10" viewBox="0 0 11 10"><path d="M5 0V10L0 5Z M11 0V10L6 5Z" fill="#8aa3a9"/></svg>
<svg style="position:absolute;left:852px;top:1043px" width="6" height="10" viewBox="0 0 6 10"><path d="M5 0V10L0 5Z" fill="#8aa3a9"/></svg>
<svg style="position:absolute;left:945px;top:1043px" width="6" height="10" viewBox="0 0 6 10"><path d="M0 0V10L5 5Z" fill="#8aa3a9"/></svg>
<svg style="position:absolute;left:962px;top:1043px" width="11" height="10" viewBox="0 0 11 10"><path d="M0 0V10L5 5Z M6 0V10L11 5Z" fill="#8aa3a9"/></svg>
<svg style="position:absolute;left:981px;top:1043px" width="14" height="10" viewBox="0 0 14 10"><path d="M0 0V10L5 5Z M6 0V10L11 5Z" fill="#8aa3a9"/><rect x="11.5" y="0" width="1.5" height="10" fill="#8aa3a9"/></svg>
<div style="left:17px;top:1058px;width:1002px;height:1px;background:#3a6d7a"></div>
<div style="left:6px;top:350px;width:1px;height:745px;background:#3a6d7a"></div>
<div style="left:6px;top:1074px;width:1830px;height:21px;border-top:1px solid #3a6d7a;border-right:1px solid #3a6d7a;border-bottom:1px solid #3a6d7a;background:#f7f7f7"></div>
<div style="left:1533px;top:290px;width:300px;height:802px;border:1px solid #3a6d7a;background:#f7f7f7"></div>
<div class="t" style="left:1544.5px;top:302.07px;font-size:20px;line-height:20px;font-weight:400;color:#1f78d1;">Yderlige funktioner</div>
<svg style="position:absolute;left:1806px;top:305px" width="12" height="11" viewBox="0 0 12 11"><path d="M1 5.5H4" stroke="#333" stroke-width="1"/><rect x="3.3" y="1" width="1.6" height="8.7" fill="#333"/><rect x="4.9" y="2" width="6.1" height="2.6" fill="#6e6e6e"/><rect x="4.9" y="5" width="6.1" height="3.7" fill="#3e3e3e"/><rect x="10.2" y="2" width="0.9" height="6.7" fill="#2a2a2a"/></svg>
<div style="left:1552px;top:337px;width:250px;height:38px;background:#aecbd1;border:1px solid #1f73c6;border-radius:5px"></div>
<svg style="position:absolute;left:1560px;top:349px" width="12" height="16" viewBox="0 0 12 16"><rect x="0.6" y="2.2" width="10.2" height="12.8" rx="1.6" fill="none" stroke="#3f6873" stroke-width="1.1"/><path d="M3.6 2.2L5.7 0.3L7.8 2.2" fill="#aecbd1" stroke="#3f6873" stroke-width="1"/><path d="M2.6 5.3H3.6M2.6 7.5H3.6M4.8 5.3H8.6M5.5 12H8.6" stroke="#3f6873" stroke-width="1"/><path d="M5.5 9.8H8.6" stroke="#7f9aa2" stroke-width="0.8"/></svg>
<div class="t" style="left:1579px;top:351.33px;font-size:13.2px;line-height:13.2px;font-weight:400;color:#333;">Vis afgifter</div>
<div style="left:1552px;top:381px;width:250px;height:38px;background:#aecbd1;border:1px solid #3a6d7a;border-radius:5px"></div>
<svg style="position:absolute;left:1560px;top:393px" width="12" height="16" viewBox="0 0 12 16"><rect x="0.6" y="2.2" width="10.2" height="12.8" rx="1.6" fill="none" stroke="#3f6873" stroke-width="1.1"/><path d="M3.6 2.2L5.7 0.3L7.8 2.2" fill="#aecbd1" stroke="#3f6873" stroke-width="1"/><path d="M2.6 5.3H3.6M2.6 7.5H3.6M4.8 5.3H8.6M5.5 12H8.6" stroke="#3f6873" stroke-width="1"/><path d="M5.5 9.8H8.6" stroke="#7f9aa2" stroke-width="0.8"/></svg>
<div class="t" style="left:1579px;top:395.33px;font-size:13.2px;line-height:13.2px;font-weight:400;color:#333;">Vis satser</div>
<div style="left:1874px;top:287px;width:1px;height:809px;background:#3a6d7a"></div>
<div style="left:1836px;top:292px;width:38px;height:161px;background:#cce4f7"></div>
<div class="t" style="left:1840.6px;top:298.7px;writing-mode:vertical-rl;font-size:17.8px;line-height:21.4px;color:#3a3a3a;-webkit-text-stroke:0.2px #cce4f7">Yderlige funktioner</div>
<div class="t" style="left:1887.6px;top:207.5px;writing-mode:vertical-rl;font-size:17.4px;line-height:20.9px;color:#3a3a3a;-webkit-text-stroke:0.25px #f7f7f7">Favoritter</div>
<div class="t" style="left:1887.6px;top:294.3px;writing-mode:vertical-rl;font-size:17.4px;line-height:20.9px;color:#3a3a3a;-webkit-text-stroke:0.25px #f7f7f7">Beskeder</div>
<div class="t" style="left:1887.6px;top:378.5px;writing-mode:vertical-rl;font-size:17.4px;line-height:20.9px;color:#3a3a3a;-webkit-text-stroke:0.25px #f7f7f7">Jobkø</div>
<div class="t" style="left:1887.6px;top:441px;writing-mode:vertical-rl;font-size:17.4px;line-height:20.9px;color:#3a3a3a;-webkit-text-stroke:0.25px #f7f7f7">News</div>
<div style="left:1886px;top:488px;width:30px;height:30px;border-radius:50%;background:#c85a3a"></div>
<div class="t" style="left:1891.8px;top:492px;writing-mode:vertical-rl;font-size:16px;line-height:19.2px;color:#ffffff;">21</div>
<svg style="position:absolute;left:1878px;top:955px" width="18" height="68" viewBox="0 0 18 68"><path d="M0 1C8 2.5 16.5 11 17 25V34.8H0V27H6.3C5.8 20 3.5 14.5 0 12.4Z" fill="#356775"/><path d="M0 56.6L11.8 54L12.9 62.8L0 65.8Z" fill="#356775"/></svg>
<div style="left:0px;top:1103px;width:1918px;height:1px;background:#3a6d7a"></div>
<div style="left:0px;top:1104px;width:1918px;height:37px;background:#eaeaea"></div>
<div style="left:0px;top:1140px;width:1918px;height:1px;background:#b9bdb2"></div>
<div class="t" style="left:4.4px;top:1116.11px;font-size:14.75px;line-height:14.75px;font-weight:400;color:#383838;">Bruger:</div>
<div class="t" style="left:58.2px;top:1116.11px;font-size:14.75px;line-height:14.75px;font-weight:400;color:#383838;">super</div>
<div class="t" style="left:102.5px;top:1116.11px;font-size:14.75px;line-height:14.75px;font-weight:400;color:#383838;">Dato:</div>
<div class="t" style="left:144.7px;top:1116.11px;font-size:14.75px;line-height:14.75px;font-weight:400;color:#383838;">15. november 2025</div>
<div style="left:279px;top:1107px;width:1px;height:31px;background:#cfcfcf"></div>
<div class="t" style="left:1853.5px;top:1116.23px;font-size:14.5px;line-height:14.5px;font-weight:700;color:#0a870a;">Online</div>
<svg style="position:absolute;left:1906px;top:1126px" width="11" height="11" viewBox="0 0 11 11"><path d="M9 1h1.5v1.5H9zM6 4h1.5v1.5H6zM9 4h1.5v1.5H9zM3 7h1.5v1.5H3zM6 7h1.5v1.5H6zM9 7h1.5v1.5H9zM0 10h1.5v1.5H0zM3 10h1.5v1.5H3zM6 10h1.5v1.5H6zM9 10h1.5v1.5H9z" fill="#666"/></svg>
</body></html>
